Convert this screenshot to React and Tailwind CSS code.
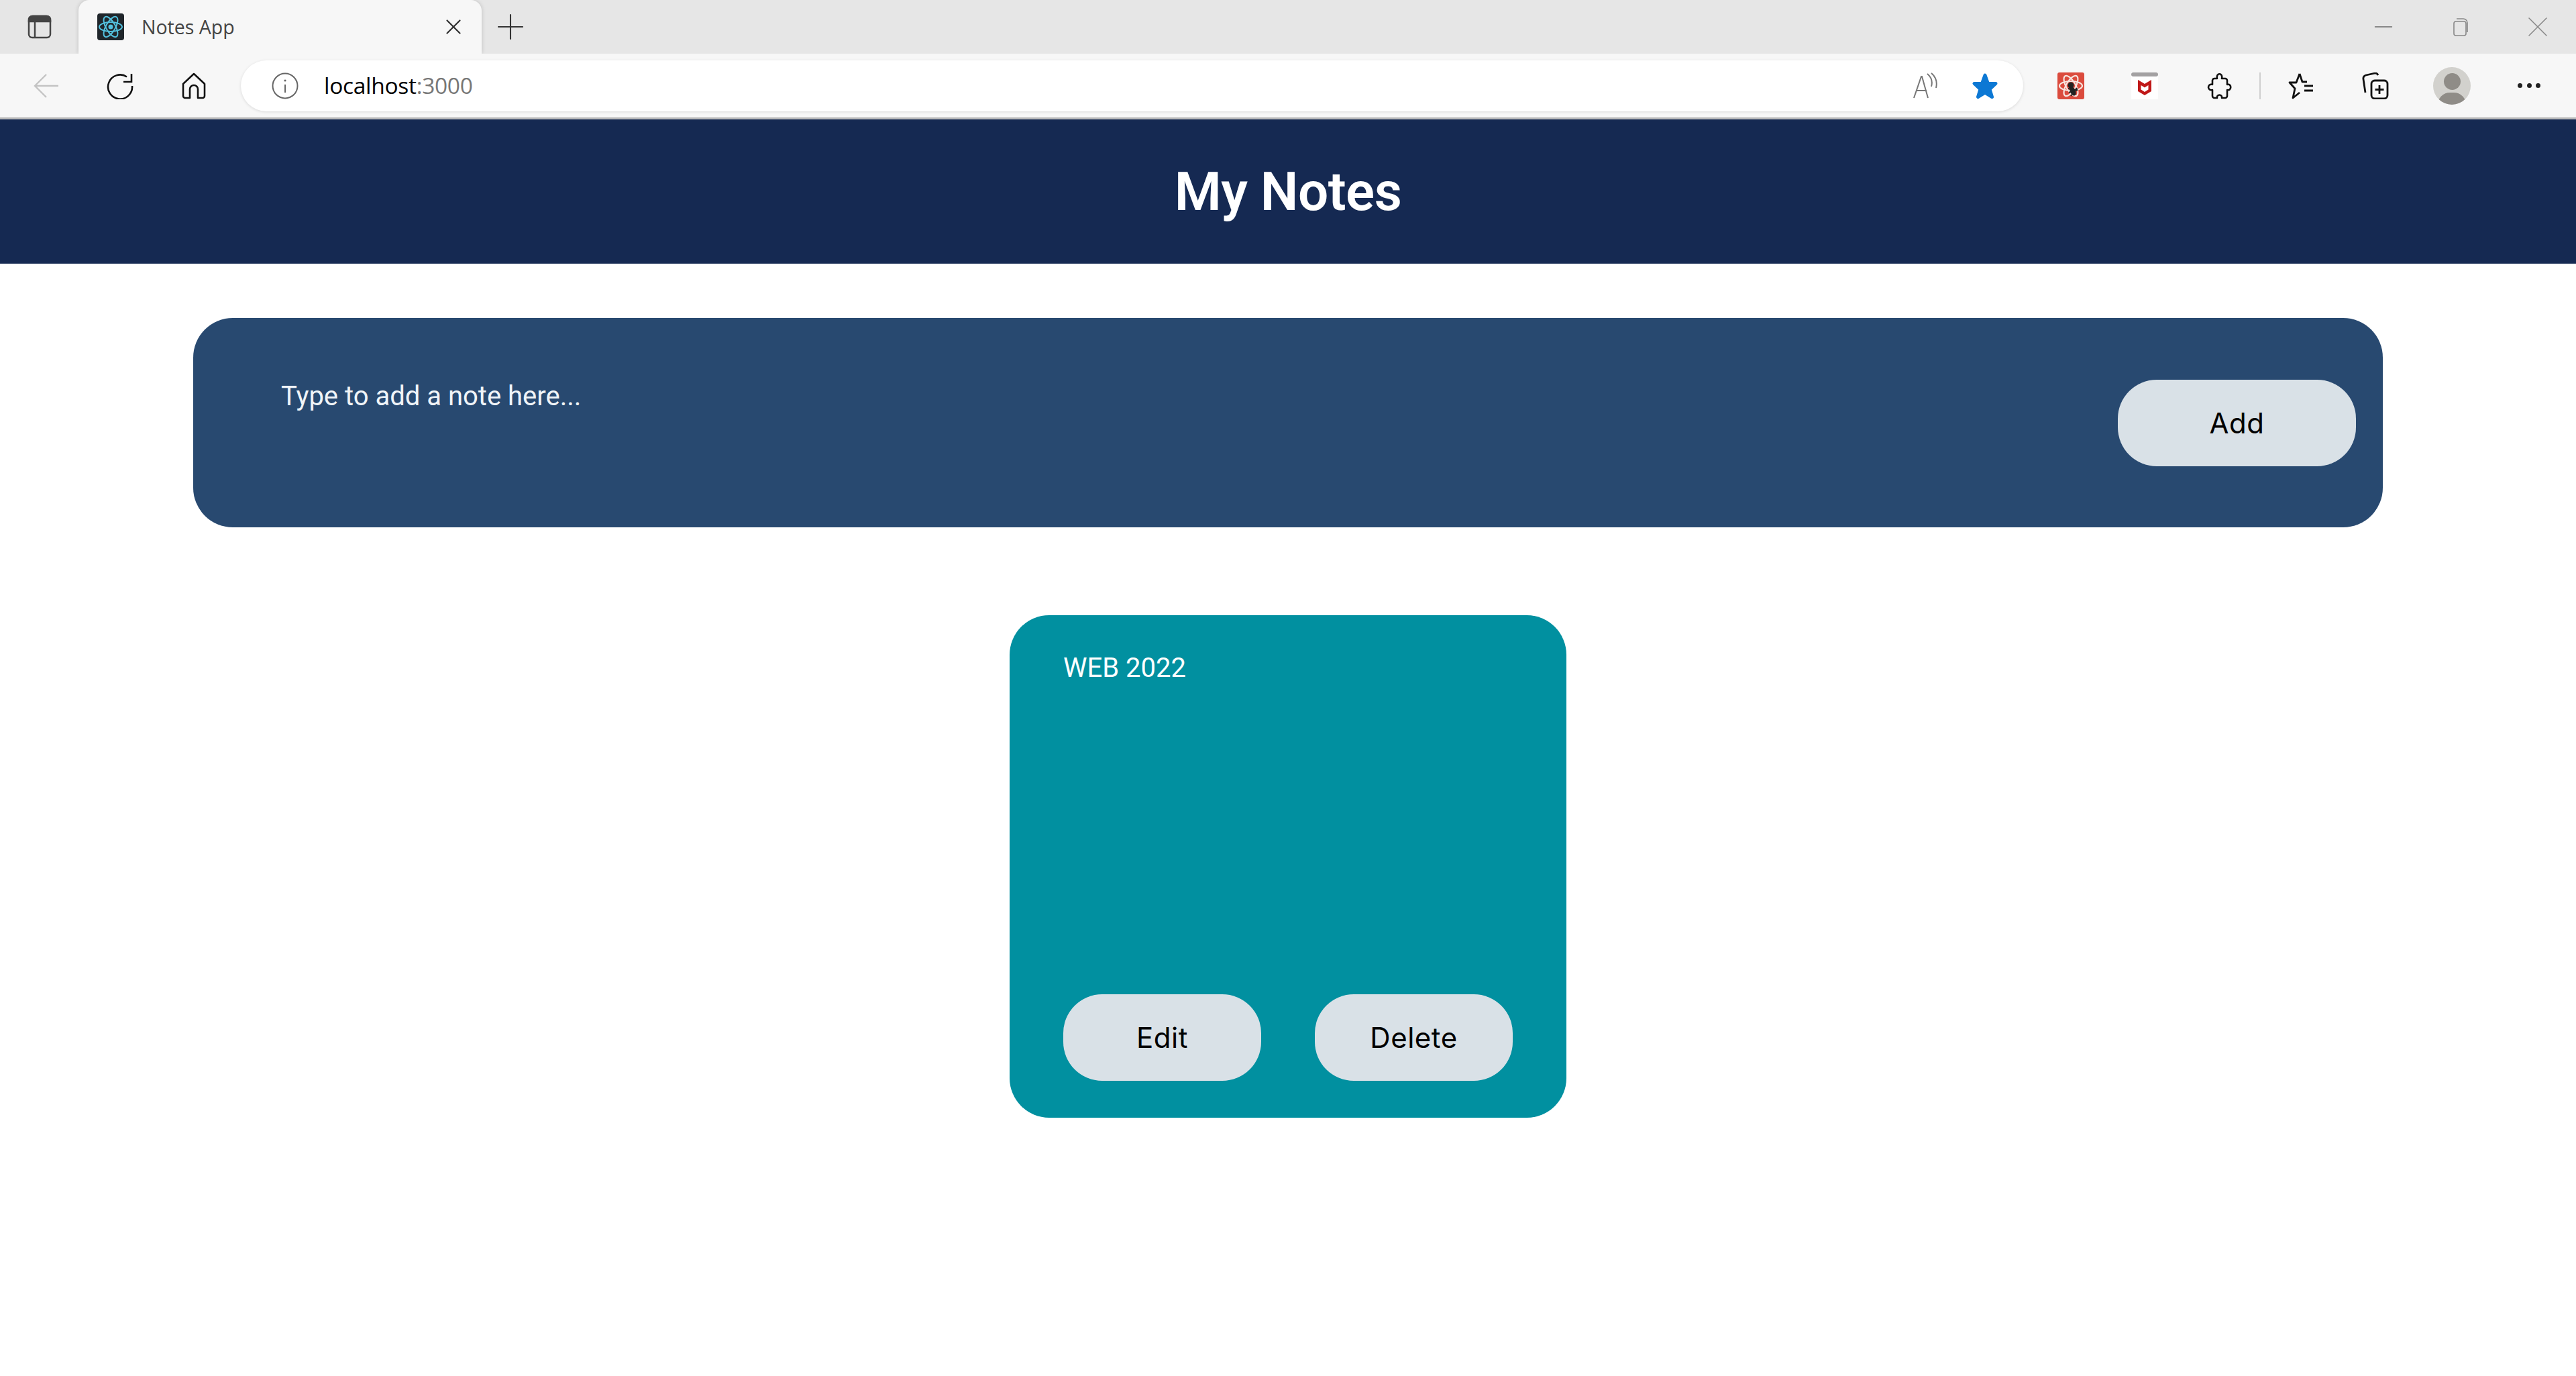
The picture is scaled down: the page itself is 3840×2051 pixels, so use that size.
import { X, Plus, Minus } from 'lucide-react';

function Button({ children, className }) {
  return (
    <button className={`h-[129px] rounded-[58px] bg-[#d9e1e7] text-[42px] font-normal tracking-[0.5px] text-black font-['Inter',sans-serif] ${className}`}>
      {children}
    </button>
  );
}

function ReactFavicon() {
  return (
    <svg viewBox="0 0 40 40" className="w-10 h-10">
      <rect width="40" height="40" rx="4" fill="#20262b" />
      <g fill="none" stroke="#53c1de" strokeWidth="2">
        <ellipse cx="20" cy="20" rx="17" ry="7" />
        <ellipse cx="20" cy="20" rx="17" ry="7" transform="rotate(60 20 20)" />
        <ellipse cx="20" cy="20" rx="17" ry="7" transform="rotate(120 20 20)" />
      </g>
      <circle cx="20" cy="20" r="3.5" fill="#53c1de" />
    </svg>
  );
}

function BugExtension() {
  return (
    <svg viewBox="0 0 40 40" className="w-10 h-10">
      <rect width="40" height="40" rx="3" fill="#db4b3d" />
      <g fill="none" stroke="#f6e4df" strokeWidth="2.2">
        <ellipse cx="20" cy="20" rx="17" ry="7" />
        <ellipse cx="20" cy="20" rx="17" ry="7" transform="rotate(60 20 20)" />
        <ellipse cx="20" cy="20" rx="17" ry="7" transform="rotate(120 20 20)" />
      </g>
      <circle cx="20" cy="19" r="4.5" fill="#222" />
      <ellipse cx="23" cy="28" rx="4" ry="7" fill="#222" transform="rotate(-25 23 28)" />
      <path d="M16 24l14 3M17 30l13-5M20 35l9-12" stroke="#222" strokeWidth="2" />
    </svg>
  );
}

function McAfeeExtension() {
  return (
    <svg viewBox="0 0 40 40" className="w-10 h-10">
      <rect width="40" height="40" fill="#ffffff" />
      <rect width="40" height="6" rx="3" fill="#a3a1a2" />
      <path d="M10 11l10 6 10-6v17l-10 6-10-6z" fill="#c01818" />
      <path d="M14.5 19l5.5 3.5 5.500-3.500v6.500l-5.500 3.500-5.500-3.500z" fill="#ffffff" />
    </svg>
  );
}

function Divider() {
  return <div className="w-[2px] h-10 bg-[#cfcfcf] ml-[40px]" />;
}

export default function App() {
  return (
    <div className="min-h-screen bg-white flex flex-col font-['Roboto',sans-serif]">
      {/* Browser tab strip */}
      <div className="h-20 bg-[#e6e6e6] flex items-start">
        <div className="w-[117px] h-20 flex items-center justify-center">
          <svg viewBox="0 0 36 36" className="w-9 h-9" fill="none" stroke="#444" strokeWidth="2.5">
            <rect x="2" y="2" width="32" height="32" rx="5" />
            <path d="M2 8a6 6 0 0 1 6-6h20a6 6 0 0 1 6 6v2H2z" fill="#444" />
            <path d="M11 10v24" />
          </svg>
        </div>
        <div className="w-[601px] h-20 bg-[#f7f7f7] rounded-t-[16px] shadow-[0_0_6px_rgba(0,0,0,0.18)] flex items-center pl-[28px] pr-[23px]">
          <ReactFavicon />
          <span className="ml-[26px] text-[28.5px] text-[#444] font-['Open_Sans',sans-serif]">Notes App</span>
          <X className="ml-auto w-[38px] h-[38px] text-[#333]" strokeWidth={1.4} />
        </div>
        <div className="w-[86px] h-20 flex items-center justify-center">
          <Plus className="w-[62px] h-[62px] text-[#333]" strokeWidth={0.8} />
        </div>
        <div className="ml-auto flex h-20 items-center">
          <div className="w-[115px] flex justify-center"><Minus className="w-[42px] h-[42px] text-[#888]" strokeWidth={1.1} /></div>
          <div className="w-[115px] flex justify-center">
            <svg viewBox="0 0 28 28" className="w-7 h-7" fill="none" stroke="#888" strokeWidth="1.6">
              <rect x="4" y="6" width="18" height="21" rx="3" />
              <path d="M8 2h10a6 6 0 0 1 6 6v14" />
            </svg>
          </div>
          <div className="w-[115px] flex justify-center"><X className="w-[52px] h-[52px] text-[#888]" strokeWidth={0.7} /></div>
        </div>
      </div>

      {/* Browser toolbar */}
      <div className="h-[98px] bg-[#f7f7f7] border-b-[3px] border-[#b9b9b9] flex items-center pl-[14px] shrink-0">
        <button className="w-[110px] flex justify-center">
          <svg viewBox="0 0 40 40" className="w-10 h-10" fill="none" stroke="#c4c4c4" strokeWidth="2.4">
            <path d="M38 20H3M20 3L3 20l17 17" />
          </svg>
        </button>
        <button className="w-[110px] flex justify-center">
          <svg viewBox="0 0 40 40" className="w-10 h-10" fill="none" stroke="#111" strokeWidth="2.6">
            <path d="M30 6.500A18 18 0 1 0 38 20" />
            <path d="M37 2v12H25" />
          </svg>
        </button>
        <button className="w-[110px] flex justify-center">
          <svg viewBox="0 0 40 40" className="w-10 h-10" fill="none" stroke="#111" strokeWidth="2.6" strokeLinejoin="round">
            <path d="M20 2L4 17v18a3 3 0 0 0 3 3h7V25a6 6 0 0 1 12 0v13h7a3 3 0 0 0 3-3V17z" />
          </svg>
        </button>

        {/* Address bar */}
        <div className="ml-[15px] w-[2657px] h-[76px] bg-white rounded-full shadow-[0_1px_4px_rgba(0,0,0,0.12)] flex items-center pl-[46px] pr-[37px]">
          <svg viewBox="0 0 40 40" className="w-10 h-10" fill="none" stroke="#666" strokeWidth="2">
            <circle cx="20" cy="20" r="18.500" />
            <path d="M20 18v12" />
            <circle cx="20" cy="12" r="1.600" fill="#666" stroke="none" />
          </svg>
          <span className="ml-[38px] text-[33.500px] text-black font-['Open_Sans',sans-serif] tracking-[-0.3px]">
            localhost<span className="text-[#777]">:3000</span>
          </span>
          <svg viewBox="0 0 40 40" className="ml-auto w-10 h-10" fill="none" stroke="#777" strokeWidth="2">
            <path d="M3 38L14 6h1l9 32M7 27h15" />
            <path d="M23 2c6 5 8 12 6 19M29 1c7 6 9 14 7 22" />
          </svg>
          <svg viewBox="0 0 40 40" className="ml-[49px] w-10 h-10" fill="#0c78d4" stroke="#0c78d4" strokeWidth="5" strokeLinejoin="round">
            <path d="M20 4l4.500 12.500H36l-9 8.500 3.500 11.500L20 30l-10.500 6.500 3.500-11.500-9-8.500h11.500z" />
          </svg>
        </div>

        <div className="ml-[51px]"><BugExtension /></div>
        <div className="ml-[70px]"><McAfeeExtension /></div>
        <svg viewBox="0 0 40 40" className="ml-[71px] w-10 h-10" fill="none" stroke="#111" strokeWidth="2.6" strokeLinejoin="round">
          <path d="M13 9h4c-2-9 9-9 7 0h5a3 3 0 0 1 3 3v6c7-2 7 10 0 8v9a3 3 0 0 1-3 3h-5c1-6-8-6-7 0h-4a3 3 0 0 1-3-3v-9c-8 2-8-10 0-8v-6a3 3 0 0 1 3-3z" />
        </svg>
        <Divider />
        <svg viewBox="0 0 40 40" className="ml-[40px] w-10 h-10" fill="none" stroke="#111" strokeWidth="2.8" strokeLinejoin="round">
          <path d="M18 2l-5 13H3l8 9-3 14 10-8" />
          <path d="M18 2l4 12h7" />
          <path d="M25 20h13M25 27h13" strokeWidth="3" />
        </svg>
        <svg viewBox="0 0 40 40" className="ml-[71px] w-10 h-10" fill="none" stroke="#111" strokeWidth="2.8" strokeLinejoin="round">
          <path d="M5 30L2 10c-.5-3 1-5 4-6l14-3c2 0 3 1 4 3" />
          <rect x="14" y="12" width="24" height="27" rx="5" />
          <path d="M26 19v13M19.500 25.500h13" />
        </svg>
        <div className="ml-[66px] w-14 h-14 rounded-full bg-[#d2d1cd] overflow-hidden relative flex justify-center">
          <div className="mt-[9px] w-[25px] h-[25px] rounded-full bg-[#8f8c87]" />
          <div className="absolute top-[38px] w-[42px] h-[36px] rounded-full bg-[#8f8c87]" />
        </div>
        <div className="ml-[67px] w-10 flex justify-between px-[3px]">
          <span className="w-[7px] h-[7px] rounded-full bg-[#222]" />
          <span className="w-[7px] h-[7px] rounded-full bg-[#222]" />
          <span className="w-[7px] h-[7px] rounded-full bg-[#222]" />
        </div>
      </div>

      {/* App header */}
      <header className="h-[215px] bg-[#152952] flex items-center justify-center shrink-0">
        <h1 className="text-[80px] font-semibold tracking-[-0.5px] text-white">My Notes</h1>
      </header>

      <main className="flex flex-col">
        {/* Add note form */}
        <form className="mt-[81px] mx-[288px] h-[312px] rounded-[59px] bg-[#284970] flex items-center pl-[131px] pr-[40px]">
          <textarea
            rows={1}
            placeholder="Type to add a note here..."
            className="flex-1 self-start mt-[87px] bg-transparent resize-none outline-none text-[40px] text-white placeholder:text-[#f0f4f8]"
          />
          <Button className="w-[355px] h-[128px]">Add</Button>
        </form>

        {/* Notes */}
        <div className="mt-[131px] mx-auto w-[830px] h-[749px] rounded-[59px] bg-[#0190a0] flex flex-col justify-between pt-[49px] px-[80px] pb-[55px]">
          <p className="text-[40px] text-white">WEB 2022</p>
          <div className="flex justify-between">
            <Button className="w-[295px]">Edit</Button>
            <Button className="w-[295px]">Delete</Button>
          </div>
        </div>
      </main>
    </div>
  );
}
